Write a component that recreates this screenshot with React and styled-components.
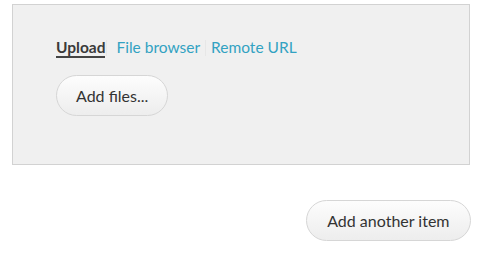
import React from "react";
import styled, { createGlobalStyle } from "styled-components";

const Global = createGlobalStyle`
  html, body { margin: 0; padding: 0; background: #fff; }
  body { font-family: Lato, "Open Sans", sans-serif; color: #333; }
`;

const Page = styled.div`
  padding: 4px 11px 0 12px;
  display: flex;
  flex-direction: column;
`;

const Panel = styled.div`
  height: 161px;
  box-sizing: border-box;
  border: 1px solid #d2d2d2;
  background: #f0f0f0;
  padding: 34px 43px 0 43px;
  display: flex;
  flex-direction: column;
  align-items: flex-start;
  gap: 17px;
`;

const Tabs = styled.div`
  display: flex;
  align-items: flex-start;
`;

const Tab = styled.a`
  font-size: 15.5px;
  line-height: 17px;
  text-decoration: none;
  color: ${(p) => (p.$active ? "#3a3a3a" : "#32a2c2")};
  font-weight: ${(p) => (p.$active ? 700 : 400)};
  border-bottom: 2px solid ${(p) => (p.$active ? "#444" : "transparent")};
  cursor: pointer;
`;

const Sep = styled.span`
  width: 1px;
  height: 16px;
  margin-top: 1px;
  background: #e7e7e7;
  margin-left: ${(p) => p.$left}px;
  margin-right: ${(p) => 10 - p.$left}px;
`;

const Button = styled.button`
  font-family: Lato, "Open Sans", sans-serif;
  font-size: 16px;
  color: #333;
  height: 41px;
  padding: 0 ${(p) => p.$pad || 19}px;
  border: 1px solid #d6d6d6;
  border-radius: 21px;
  background: linear-gradient(#fdfdfd, #ededed);
  cursor: pointer;
`;

const Footer = styled.div`
  display: flex;
  justify-content: flex-end;
  margin-top: 35px;
  margin-right: -1px;
`;

export default function App() {
  return (
    <>
      <Global />
      <Page>
        <Panel>
          <Tabs>
            <Tab $active>Upload</Tab>
            <Sep $left={1} />
            <Tab>File browser</Tab>
            <Sep $left={5} />
            <Tab>Remote URL</Tab>
          </Tabs>
          <Button $pad={19}>Add files...</Button>
        </Panel>
        <Footer>
          <Button $pad={20.5}>Add another item</Button>
        </Footer>
      </Page>
    </>
  );
}
